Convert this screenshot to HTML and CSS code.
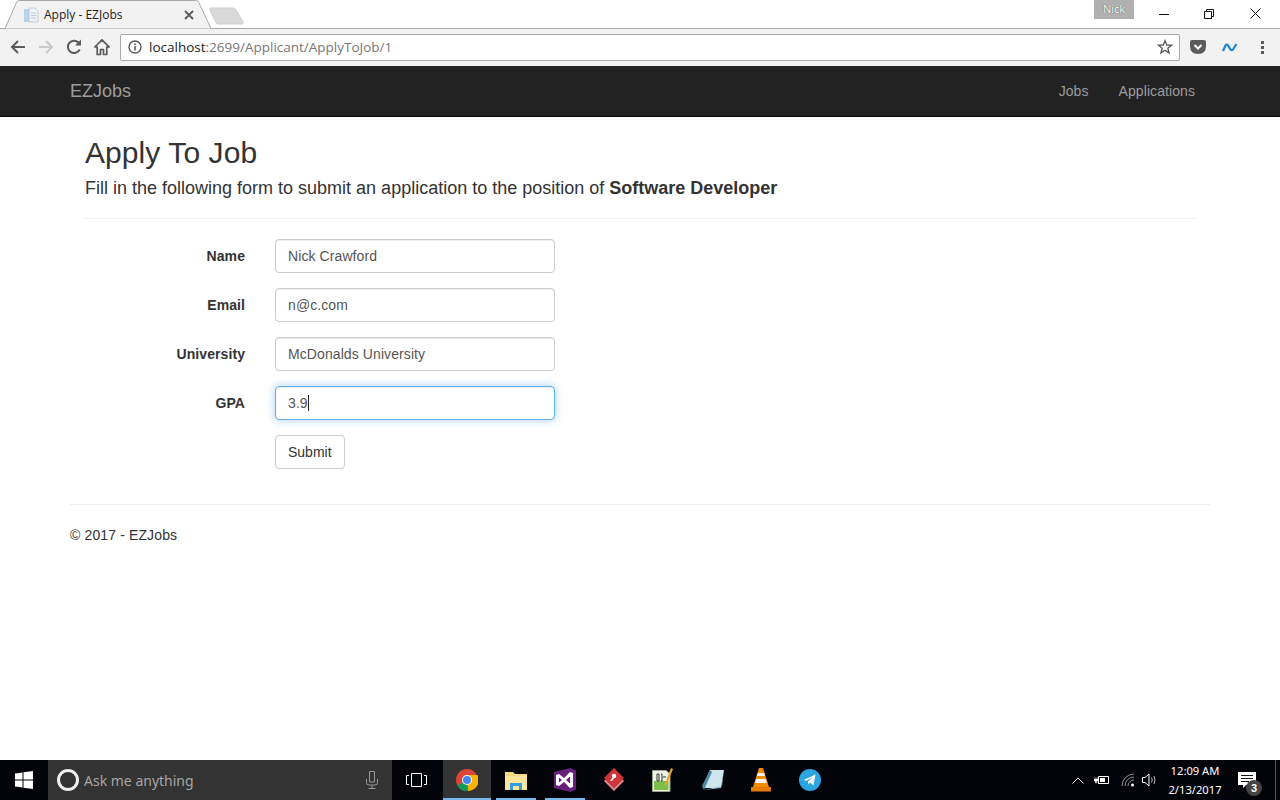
FILE: index.html
```html
<!DOCTYPE html>
<html lang="en">
<head>
<meta charset="utf-8">
<title>Apply - EZJobs</title>
<link rel="stylesheet" href="styles.css">
</head>
<body>
<div class="screen">
  <header class="chrome">
    <div class="tabstrip">
      <div class="tab">
        <svg class="tab-shape" width="218" height="29" viewBox="0 0 218 29"><path d="M0 28.500H5L16.500 2.500Q17.200 .5 19.500 .5H195.500Q198 .5 198.800 2.500L211 28.500H218" fill="#f2f2f2" stroke="#a8a8a8"/></svg>
        <svg class="favicon" width="16" height="16" viewBox="0 0 16 16"><path d="M1 2H9V15H1Z" fill="#b9d3ea"/><path d="M6 1H12L15 4V15H6Z" fill="#eef2f6" stroke="#b5c3d2" stroke-width=".8"/><path d="M8 6H13M8 8.500H13M8 11H13" stroke="#c0cbd6"/></svg>
        <span class="tab-title">Apply - EZJobs</span>
        <svg class="tab-close" width="10" height="10" viewBox="0 0 10 10"><path d="M1 1L9 9M9 1L1 9" stroke="#5a5a5a" stroke-width="1.800"/></svg>
      </div>
      <svg class="newtab" width="36" height="18" viewBox="0 0 36 18"><path d="M1.500 1H24Q26 1 27 3L34 15Q34.500 17 33 17H9Q7.500 17 7 15.500L.5 2.500Q.5 1 1.500 1Z" fill="#d9d9d9" stroke="#cfcfcf"/></svg>
      <div class="spacer"></div>
      <div class="profile">Nick</div>
      <div class="winbtn"><svg width="10" height="10" viewBox="0 0 10 10"><path d="M0 5.500H10" stroke="#111"/></svg></div>
      <div class="winbtn"><svg width="10" height="10" viewBox="0 0 10 10"><path d="M.5 2.500H7.500V9.500H.5ZM2.500 2.500V.5H9.500V7.500H7.500" fill="none" stroke="#111"/></svg></div>
      <div class="winbtn winbtn-close"><svg width="11" height="11" viewBox="0 0 11 11"><path d="M.5 .5L10.500 10.500M10.500 .5L.5 10.500" stroke="#111"/></svg></div>
    </div>
    <div class="toolbar">
      <svg class="tb-icon" width="18" height="18" viewBox="0 0 18 18"><path d="M16 9H3.500M9 3L3 9L9 15" fill="none" stroke="#5a5a5a" stroke-width="2"/></svg>
      <svg class="tb-icon" width="18" height="18" viewBox="0 0 18 18"><path d="M2 9H14.500M9 3L15 9L9 15" fill="none" stroke="#c9c9c9" stroke-width="2"/></svg>
      <svg class="tb-icon" width="18" height="18" viewBox="0 0 18 18"><path d="M14.700 11.500A6.200 6.200 0 1 1 13.500 4.500" fill="none" stroke="#5a5a5a" stroke-width="2"/><path d="M16 1.500V7.500H10Z" fill="#5a5a5a"/></svg>
      <svg class="tb-icon" width="18" height="18" viewBox="0 0 18 18"><path d="M9 1.800L1.800 9H4.200V16.500H7.500V11.500H10.500V16.500H13.800V9H16.200Z" fill="none" stroke="#5a5a5a" stroke-width="1.700" stroke-linejoin="round"/></svg>
      <div class="omnibox">
        <svg class="info" width="14" height="14" viewBox="0 0 14 14"><circle cx="7" cy="7" r="6" fill="none" stroke="#5a5a5a" stroke-width="1.400"/><path d="M7 6V10.500M7 3.500V5" stroke="#5a5a5a" stroke-width="1.600"/></svg>
        <span class="url"><span class="host">localhost</span>:2699/Applicant/ApplyToJob/1</span>
        <svg width="16" height="16" viewBox="0 0 16 16"><path d="M8 1.800L9.800 6.200H14.500L10.800 9.200L12.100 13.900L8 11.200L3.900 13.900L5.200 9.200L1.500 6.200H6.200Z" fill="none" stroke="#555" stroke-width="1.300"/></svg>
      </div>
      <svg class="ext-pocket" width="16" height="14" viewBox="0 0 16 14"><path d="M0 2Q0 0 2 0H14Q16 0 16 2V6Q16 14 8 14Q0 14 0 6Z" fill="#5b5b5b"/><path d="M4.500 5L8 8.500L11.500 5" fill="none" stroke="#fff" stroke-width="2"/></svg>
      <svg class="ext-n" width="16" height="9" viewBox="0 0 16 9"><path d="M1 8L3.500 2.500Q4.700 .8 6 2.500L8.500 6.500Q10 8 11 6.500L14.500 1" fill="none" stroke="#1b87d8" stroke-width="2.200"/></svg>
      <svg class="ext-menu" width="3" height="13" viewBox="0 0 3 13"><path d="M1.500 0V3M1.500 5V8M1.500 10V13" stroke="#5a5a5a" stroke-width="3"/></svg>
    </div>
  </header>

  <nav class="navbar">
    <a class="brand">EZJobs</a>
    <div class="nav-links">
      <a class="nav-link">Jobs</a>
      <a class="nav-link">Applications</a>
    </div>
  </nav>

  <main class="page">
    <div class="content">
      <h2 class="title">Apply To Job</h2>
      <p class="lead">Fill in the following form to submit an application to the position of <strong>Software Developer</strong></p>
      <hr class="rule">
      <form class="form">
        <label class="label">Name</label>
        <input class="field" value="Nick Crawford">
        <label class="label">Email</label>
        <input class="field" value="n@c.com">
        <label class="label">University</label>
        <input class="field" value="McDonalds University">
        <label class="label">GPA</label>
        <div class="field-wrap">
          <input class="field focused" value="3.9">
          <span class="caret"></span>
        </div>
        <span></span>
        <div><button class="btn" type="button">Submit</button></div>
      </form>
    </div>
    <hr class="rule footer-rule">
    <footer class="footer">© 2017 - EZJobs</footer>
  </main>

  <div class="taskbar">
    <div class="start"><svg width="18" height="18" viewBox="0 0 18 18"><path d="M0 2.500L7.500 1.500V8.500H0ZM8.500 1.300L18 0V8.500H8.500ZM0 9.500H7.500V16.500L0 15.500ZM8.500 9.500H18V18L8.500 16.700Z" fill="#fff"/></svg></div>
    <div class="search">
      <span class="cortana"></span>
      <span class="search-text">Ask me anything</span>
      <svg class="mic" width="12" height="18" viewBox="0 0 12 18"><path d="M3.500 .5H8.500V11H3.500ZM.5 8V11.500Q.5 14 3 14H9Q11.500 14 11.500 11.500V8M6 14V17M2.500 17.500H9.500" fill="none" stroke="#9a9a9a"/></svg>
    </div>
    <div class="taskview"><svg width="21" height="14" viewBox="0 0 21 14"><path d="M5.500 .5H15.500V13.500H5.500ZM3 2.500H.5V11.500H3M18 2.500H20.500V11.500H18" fill="none" stroke="#fff"/></svg></div>
    <div class="apps">
      <div class="app active"><svg width="22" height="22" viewBox="0 0 22 22"><circle cx="11" cy="11" r="11" fill="#db4437"/><path d="M11 11L1.500 16.500A11 11 0 0 0 12 22Z" fill="#0f9d58"/><path d="M11 6H21.600A11 11 0 0 1 12 22Z" fill="#f4b400"/><circle cx="11" cy="11" r="5" fill="#fff"/><circle cx="11" cy="11" r="4" fill="#4285f4"/></svg></div>
      <div class="app running"><svg width="22" height="19" viewBox="0 0 22 19"><path d="M0 1H8L10 3H22V19H0Z" fill="#f6d77d"/><path d="M0 5H22V19H0Z" fill="#fbe49a"/><path d="M5 12H17V19H14V15H8V19H5Z" fill="#2d9fe0"/></svg></div>
      <div class="app running"><svg width="22" height="24" viewBox="0 0 22 24"><path d="M16.500 0L22 2.500V21.500L16.500 24L0 20V4Z" fill="#68217a"/><path d="M2 7L5 6L10 10L16 4L19 5V19L16 20L10 14L5 18L2 17Z" fill="#fff"/><path d="M5 9.500V14.500L8 12ZM16 8.500L12 12L16 15.500Z" fill="#68217a"/></svg></div>
      <div class="app"><svg width="20" height="24" viewBox="0 0 20 24"><path d="M10 0L20 10L10 20L0 10Z" fill="#d13438"/><path d="M0 13L10 23L20 13L18.500 11.500L10 20L1.500 11.500Z" fill="#e8878a"/><circle cx="10" cy="8" r="2.200" fill="#fff"/><path d="M9 9L6 13H8L11 9Z" fill="#fff"/></svg></div>
      <div class="app"><svg width="22" height="24" viewBox="0 0 22 24"><path d="M.5 2.500H14L18 6V23.500H.5Z" fill="#eef2e6" stroke="#9aa08c"/><path d="M2 13H16.500V22H2Z" fill="#7cc04b"/><path d="M5 6H7V13H5ZM9 6H10V13H9M11 9H14" stroke="#333" fill="none"/><path d="M21 1L15 16L12.500 20L13 15.500L19 0Z" fill="#e3a32a"/></svg></div>
      <div class="app"><svg width="23" height="20" viewBox="0 0 23 20"><path d="M9 0H23L20 18H2Z" fill="#cfe6ef"/><path d="M9 0L1 16L3 20L11 2Z" fill="#4f8ca8"/><path d="M3 20L20 18L23 0L21 16Z" fill="#8fb9cb"/></svg></div>
      <div class="app"><svg width="20" height="24" viewBox="0 0 20 24"><path d="M8 0H12L18 19H2Z" fill="#f08a00"/><path d="M6.800 5H13.200L14 8H6Z" fill="#f4f4f4"/><path d="M5.200 11H14.800L15.800 15H4Z" fill="#f4f4f4"/><path d="M0 19H20V23.500H0Z" fill="#e57a00"/></svg></div>
      <div class="app"><svg width="22" height="22" viewBox="0 0 22 22"><circle cx="11" cy="11" r="11" fill="#2ca5e0"/><path d="M4.500 11L16.500 5.500L14.500 16.500L11 13.500L9.500 15.500L9 12.500L14 8L7.500 11.800Z" fill="#fff"/></svg></div>
    </div>
    <div class="spacer"></div>
    <div class="tray">
      <svg width="12" height="7" viewBox="0 0 12 7"><path d="M.5 6.500L6 1L11.500 6.500" fill="none" stroke="#fff"/></svg>
      <svg width="16" height="10" viewBox="0 0 16 10"><path d="M4.500 1.500H14.500V8.500H4.500Z" fill="none" stroke="#fff"/><path d="M1 2V4M3 2V4M0 4H4V6H2.500V8H1.500V6H0Z" fill="#fff" stroke="#fff" stroke-width=".5"/><path d="M6 3H11V7H6Z" fill="#fff"/></svg>
      <svg class="tray-wifi" width="14" height="14" viewBox="0 0 14 14"><path d="M1 13A12 12 0 0 1 13 1M4 13A9 9 0 0 1 13 4M7 13A6 6 0 0 1 13 7" fill="none" stroke="#8f8f8f"/><circle cx="11.500" cy="12" r="1.500" fill="#fff"/></svg>
      <svg class="tray-sound" width="15" height="14" viewBox="0 0 15 14"><path d="M.5 4.500H3L7 1V13L3 9.500H.5Z" fill="none" stroke="#fff"/><path d="M9.500 4.500Q11 7 9.500 9.500M12 3Q14 7 12 11" fill="none" stroke="#bbb"/></svg>
    </div>
    <div class="clock"><div>12:09 AM</div><div>2/13/2017</div></div>
    <div class="notify">
      <svg width="18" height="17" viewBox="0 0 18 17"><path d="M0 0H18V13H8L5 16V13H0Z" fill="#fff"/><path d="M3 3.500H15M3 6.500H15M3 9.500H11" stroke="#111"/></svg>
      <span class="badge">3</span>
    </div>
    <div class="show-desktop"></div>
  </div>
</div>
</body>
</html>
```

FILE: styles.css
```css
* { box-sizing: border-box; }
html, body { margin: 0; padding: 0; }
body { font-family: "Liberation Sans", Arial, sans-serif; font-size: 14px; color: #333; background: #fff; }
.screen { width: 1280px; height: 800px; overflow: hidden; display: flex; flex-direction: column; }
.spacer { flex: 1; }

.chrome { height: 66px; flex: none; background: #f2f2f2; }
.tabstrip { height: 29px; background: #fff; display: flex; align-items: flex-start; padding-right: 4px; box-shadow: inset 0 -1px 0 #a8a8a8; }
.tab { position: relative; width: 212px; height: 29px; display: flex; align-items: center; padding-left: 23px; flex: none; }
.tab-shape { position: absolute; left: 0; top: 0; }
.favicon, .tab-title, .tab-close { position: relative; }
.favicon { flex: none; }
.tab-title { margin-left: 5px; font-family: "Open Sans", "Noto Sans", sans-serif; font-size: 12px; color: #222; width: 139px; white-space: nowrap; }
.tab-close { margin-left: 1px; }
.newtab { margin: 7px 0 0 -3px; flex: none; }
.profile { width: 40px; height: 19px; background: #b0b0b0; color: #fff; font-size: 11px; text-align: center; line-height: 18px; margin-right: 7px; text-shadow: 0 0 1px #333; font-family: "Open Sans", sans-serif; }
.winbtn { width: 45px; height: 27px; display: flex; align-items: center; justify-content: center; }
.winbtn-close { padding-left: 4px; }

.toolbar { height: 36px; display: flex; align-items: center; padding-left: 9px; }
.tb-icon { flex: none; margin-right: 10px; }
.omnibox { width: 1060px; height: 27px; margin-left: -1px; background: #fff; border: 1px solid #a9a9a9; border-radius: 2px; display: flex; align-items: center; padding: 0 6px 0 7px; flex: none; }
.info { flex: none; }
.url { flex: 1; margin-left: 7px; font-family: "Open Sans", "Noto Sans", sans-serif; font-size: 13.5px; color: #767676; white-space: nowrap; }
.host { color: #222; }
.ext-pocket { margin-left: 10px; flex: none; }
.ext-n { margin-left: 16px; flex: none; }
.ext-menu { margin-left: 23px; flex: none; }

.navbar { height: 51px; flex: none; background: #222; border-bottom: 1px solid #080808; padding: 0 85px 0 70px; display: flex; align-items: center; justify-content: space-between; }
.brand { font-size: 18px; color: #9d9d9d; }
.nav-links { display: flex; gap: 30px; }
.nav-link { color: #9d9d9d; font-size: 14px; letter-spacing: .08px; }

.page { flex: 1; padding: 0 70px; }
.content { padding: 0 15px; }
.title { margin: 19px 0 0; font-size: 30px; font-weight: 500; line-height: 33px; color: #333; letter-spacing: .08px; }
.lead { margin: 9px 0 0; font-size: 18px; line-height: 20px; color: #333; }
.rule { margin: 0; border: 0; border-top: 1px solid #eee; }
.content .rule { margin-top: 20px; }
.form { margin-top: 20px; display: grid; grid-template-columns: 160px 280px; column-gap: 30px; row-gap: 15px; align-items: center; }
.label { text-align: right; font-weight: 700; font-size: 14px; color: #333; letter-spacing: .08px; }
.field { display: block; width: 280px; height: 34px; padding: 6px 12px; font: 14px "Liberation Sans", Arial, sans-serif; letter-spacing: .09px; color: #555; border: 1px solid #ccc; border-radius: 4px; background: #fff; outline: 0; box-shadow: inset 0 1px 1px rgba(0,0,0,.075); }
.field.focused { border-color: #66afe9; box-shadow: inset 0 1px 1px rgba(0,0,0,.075), 0 0 8px rgba(102,175,233,.6); }
.field-wrap { position: relative; }
.caret { position: absolute; left: 33px; top: 9px; width: 1px; height: 16px; background: #222; }
.btn { display: block; height: 34px; padding: 6px 12px; font: 14px "Liberation Sans", Arial, sans-serif; color: #333; background: #fff; border: 1px solid #ccc; border-radius: 4px; }
.footer-rule { margin-top: 35px; }
.footer { margin-top: 20px; font-size: 14px; line-height: 20px; color: #333; letter-spacing: .13px; }

.taskbar { height: 40px; flex: none; background: #02040a; display: flex; align-items: center; color: #fff; }
.start { width: 48px; height: 40px; display: flex; align-items: center; justify-content: center; flex: none; }
.search { width: 344px; height: 40px; background: #333; display: flex; align-items: center; padding: 0 14px 0 9px; flex: none; }
.cortana { width: 22px; height: 22px; border: 3px solid #f0f0f0; border-radius: 50%; flex: none; }
.search-text { flex: 1; margin-left: 5px; font-family: "Noto Sans", "Open Sans", sans-serif; font-size: 14px; color: #a5a5a5; }
.mic { flex: none; }
.taskview { width: 51px; padding-right: 3px; display: flex; justify-content: center; flex: none; }
.apps { display: flex; gap: 1px; }
.app { width: 48px; height: 40px; display: flex; align-items: center; justify-content: center; position: relative; flex: none; }
.app.active { background: #333; box-shadow: inset 0 -2px 0 #76b9ed; }
.app.running::after { content: ""; position: absolute; left: 4px; right: 4px; bottom: 0; height: 2px; background: #76b9ed; }
.tray { display: flex; align-items: center; gap: 10px; }
.tray-wifi { margin-left: 1px; }
.tray-sound { margin-left: -3px; }
.clock { width: 76px; font-family: "Noto Sans", "Open Sans", sans-serif; font-size: 11.2px; line-height: 19px; text-align: center; color: #fff; }
.notify { position: relative; width: 42px; height: 40px; padding-right: 14px; display: flex; align-items: center; justify-content: center; }
.badge { position: absolute; left: 13px; top: 20px; width: 16px; height: 16px; border-radius: 50%; background: #444; font-size: 11px; font-weight: 700; line-height: 16px; text-align: center; color: #fff; }
.show-desktop { width: 5px; height: 40px; border-left: 1px solid #555; }
```
